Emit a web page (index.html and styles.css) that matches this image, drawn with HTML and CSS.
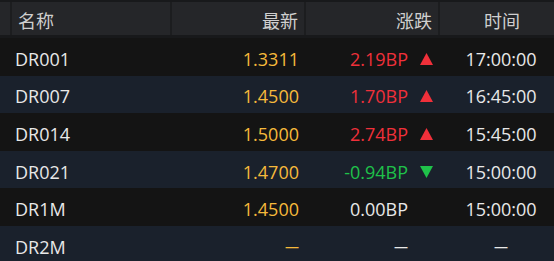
FILE: index.html
```html
<!DOCTYPE html>
<html lang="zh">
<head>
<meta charset="utf-8">
<link rel="stylesheet" href="styles.css">
</head>
<body>
<div class="board">
  <div class="head">
    <div class="hc stub"></div>
    <div class="hc name">名称</div>
    <div class="hc num">最新</div>
    <div class="hc num">涨跌</div>
    <div class="hc time">时间</div>
  </div>
  <div class="row odd">
    <div class="c name">DR001</div>
    <div class="c num last">1.3311</div>
    <div class="c chg up"><span>2.19BP</span><svg class="tri" viewBox="0 0 13 12"><polygon points="6.5,0 13,12 0,12"/></svg></div>
    <div class="c time">17:00:00</div>
  </div>
  <div class="row even">
    <div class="c name">DR007</div>
    <div class="c num last">1.4500</div>
    <div class="c chg up"><span>1.70BP</span><svg class="tri" viewBox="0 0 13 12"><polygon points="6.5,0 13,12 0,12"/></svg></div>
    <div class="c time">16:45:00</div>
  </div>
  <div class="row odd">
    <div class="c name">DR014</div>
    <div class="c num last">1.5000</div>
    <div class="c chg up"><span>2.74BP</span><svg class="tri" viewBox="0 0 13 12"><polygon points="6.5,0 13,12 0,12"/></svg></div>
    <div class="c time">15:45:00</div>
  </div>
  <div class="row even">
    <div class="c name">DR021</div>
    <div class="c num last">1.4700</div>
    <div class="c chg down"><span>-0.94BP</span><svg class="tri" viewBox="0 0 13 12"><polygon points="0,0 13,0 6.5,12"/></svg></div>
    <div class="c time">15:00:00</div>
  </div>
  <div class="row odd">
    <div class="c name">DR1M</div>
    <div class="c num last">1.4500</div>
    <div class="c chg"><span>0.00BP</span><svg class="tri" viewBox="0 0 13 12"></svg></div>
    <div class="c time">15:00:00</div>
  </div>
  <div class="row even">
    <div class="c name">DR2M</div>
    <div class="c num last"><span class="dash">—</span></div>
    <div class="c chg"><span class="dash">—</span><svg class="tri" viewBox="0 0 13 12"></svg></div>
    <div class="c time"><span class="dash">—</span></div>
  </div>
</div>
</body>
</html>
```
FILE: styles.css
```css
html, body {
  margin: 0;
  padding: 0;
  background: #1a212c;
}
body {
  width: 554px;
  height: 261px;
  overflow: hidden;
  font-family: "Open Sans", "Noto Sans CJK SC", sans-serif;
  color: #e6e6e6;
}
.board {
  display: flex;
  flex-direction: column;
}
.head {
  display: grid;
  grid-template-columns: 10px 160px 134px 134px 116px;
  height: 33px;
  background: #252629;
  border-top: 2px solid #18191b;
  border-bottom: 3px solid #18191b;
}
.hc {
  display: flex;
  align-items: center;
  padding-top: 2px;
  font-family: "Noto Sans CJK SC", sans-serif;
  font-size: 18px;
  color: #cfcfcf;
  border-left: 2px solid #1c1d1f;
}
.hc.stub { border-left: none; }
.hc.name { padding-left: 6px; }
.hc.num { justify-content: flex-end; padding-right: 6px; }
.hc.time { justify-content: center; padding-left: 10px; }
.row {
  display: grid;
  grid-template-columns: 170px 134px 134px 116px;
  height: 37.6px;
  align-items: center;
  font-size: 18px;
}
.row.odd { background: #141414; }
.row.even { background: #1a212c; }
.c {
  display: flex;
  align-items: center;
  padding-top: 4px;
}
.c.name { padding-left: 15px; color: #e8e8e8; }
.c.num { justify-content: flex-end; padding-right: 5px; }
.c.last { color: #f6b93b; }
.c.chg { justify-content: flex-end; padding-right: 5px; color: #e8e8e8; }
.c.chg.up { color: #f0303a; }
.c.chg.down { color: #1fc24a; }
.tri {
  width: 13px;
  height: 12px;
  margin-left: 12px;
  fill: currentColor;
}
.c.time { justify-content: center; padding-left: 10px; color: #e8e8e8; }
.dash { font-size: 14px; }
```
